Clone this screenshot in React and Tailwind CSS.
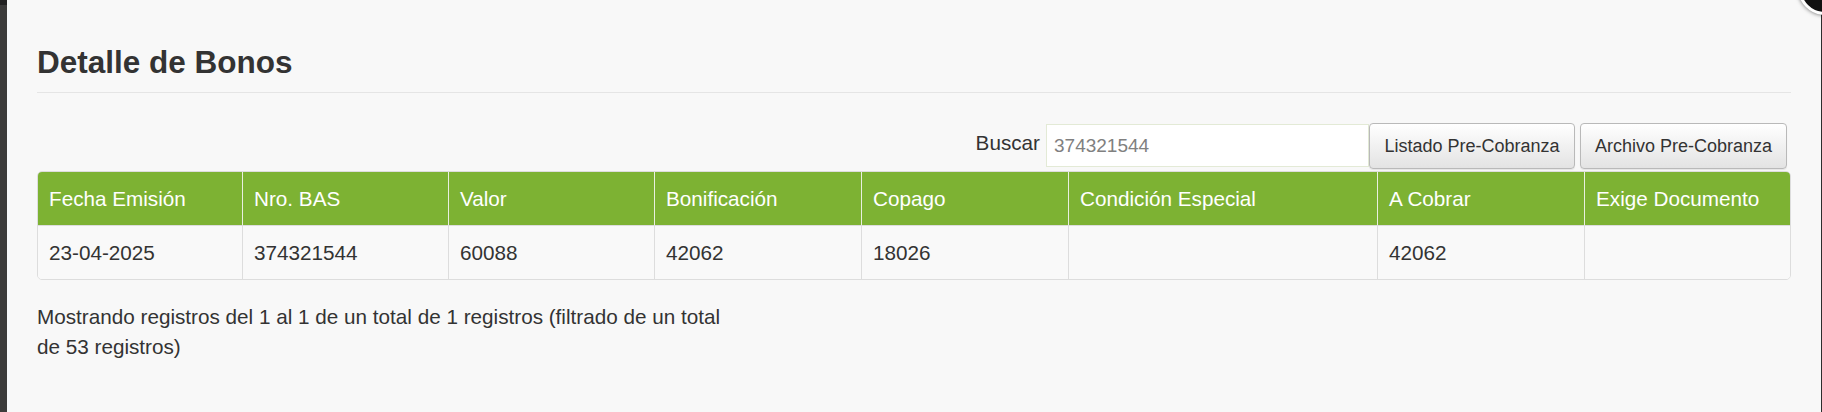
import React from "react";

const cols = [
  { label: "Fecha Emisión", value: "23-04-2025", w: "w-[204px]" },
  { label: "Nro. BAS", value: "374321544", w: "w-[206px]" },
  { label: "Valor", value: "60088", w: "w-[206px]" },
  { label: "Bonificación", value: "42062", w: "w-[207px]" },
  { label: "Copago", value: "18026", w: "w-[207px]" },
  { label: "Condición Especial", value: "", w: "w-[309px]" },
  { label: "A Cobrar", value: "42062", w: "w-[207px]" },
  { label: "Exige Documento", value: "", w: "flex-1" },
];

export default function App() {
  return (
    <div
      className="relative w-[1822px] h-[412px] overflow-hidden bg-[#3c3b3a] flex text-[#333]"
      style={{ fontFamily: '"Liberation Sans", Arial, Helvetica, sans-serif' }}
    >
      <div className="absolute left-0 top-0 w-[7px] h-[5px] bg-[#232222]" />
      <div className="ml-[7px] w-[1814px] h-full bg-[#f8f8f8] px-[30px]">
        <div className="mt-[46px] pb-[13px] border-b border-[#e5e5e5] text-[31.5px] leading-[33px] font-bold text-[#333]">
          Detalle de Bonos
        </div>

        <div className="mt-[30px] h-[46px] flex items-start justify-end pr-[4px]">
          <span className="mt-[5px] text-[20.7px] leading-[30px] text-[#333]">Buscar</span>
          <input
            readOnly
            value="374321544"
            className="ml-[6px] mt-[1px] w-[323px] h-[43px] bg-white border border-[#e3ead6] px-[7px] text-[19px] text-[#808080] outline-none"
            style={{ fontFamily: '"Liberation Sans", Arial, Helvetica, sans-serif' }}
          />
          <button className="w-[206px] h-[46px] rounded-[4px] border border-[#b9b9b9] bg-gradient-to-b from-white to-[#e3e3e3] text-[18px] text-[#333] shadow-[0_1px_1px_rgba(0,0,0,0.08)]">
            Listado Pre-Cobranza
          </button>
          <button className="ml-[5px] w-[207px] h-[46px] rounded-[4px] border border-[#b9b9b9] bg-gradient-to-b from-white to-[#e3e3e3] text-[18px] text-[#333] shadow-[0_1px_1px_rgba(0,0,0,0.08)]">
            Archivo Pre-Cobranza
          </button>
        </div>

        <div className="mt-[2px] border border-[#dddddd] rounded-[5px] overflow-hidden text-[20.7px]">
          <div className="flex bg-[#7db233] text-white border-b border-[#dddddd]">
            {cols.map((c, i) => (
              <div
                key={c.label}
                className={`${c.w} ${i > 0 ? "border-l border-[#e9efe0]" : ""} px-[11px] py-[12px] leading-[29px] whitespace-nowrap`}
              >
                {c.label}
              </div>
            ))}
          </div>
          <div className="flex bg-[#f9f9f9] text-[#333]">
            {cols.map((c, i) => (
              <div
                key={c.label}
                className={`${c.w} ${i > 0 ? "border-l border-[#dddddd]" : ""} px-[11px] py-[12px] leading-[29px] whitespace-nowrap`}
              >
                {c.value}
              </div>
            ))}
          </div>
        </div>

        <div className="mt-[22px] w-[700px] text-[20.7px] leading-[30px] text-[#333]">
          Mostrando registros del 1 al 1 de un total de 1 registros (filtrado de un total de 53 registros)
        </div>
      </div>
      <div className="w-[1px] h-full bg-[#2e2e2e]" />

      <div className="absolute left-[1798px] top-[-39px] w-[54px] h-[54px] rounded-full bg-[#111] border-[3px] border-white shadow-[0_0_4px_rgba(0,0,0,0.6)]" />
    </div>
  );
}
